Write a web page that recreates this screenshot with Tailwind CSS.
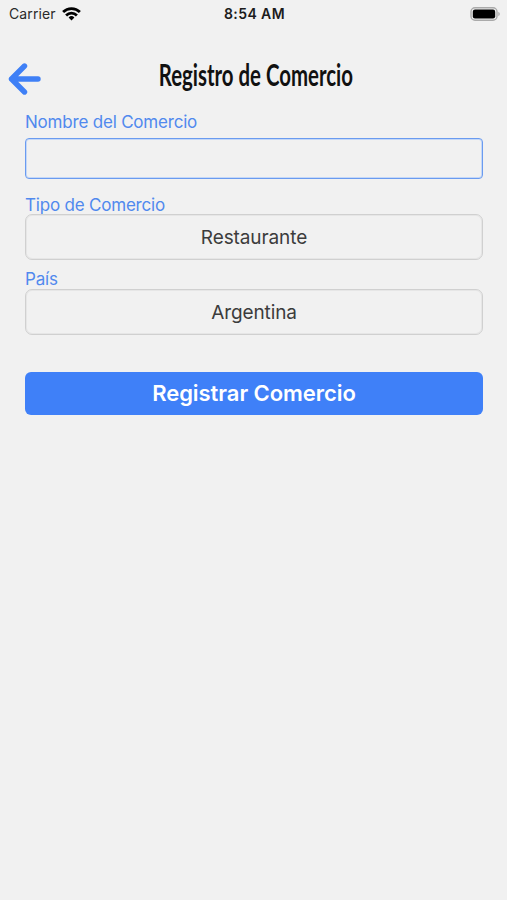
<!DOCTYPE html>
<html lang="es">

<head>
    <meta charset="UTF-8">
    <meta name="viewport" content="width=device-width, initial-scale=1.0">
    <script src="https://cdn.jsdelivr.net/npm/@tailwindcss/browser@4"></script>
    <title>Registro de Comercio</title>
</head>

<body class="min-h-screen bg-[#f1f1f1] font-['Inter',sans-serif] overflow-hidden">
    <!-- status bar -->
    <div class="grid grid-cols-3 items-center h-7 pl-[9px] pr-[7px]">
        <div class="flex items-center gap-[6px]">
            <span class="text-[14px] leading-5 tracking-[0.1px] text-[#2a2a2a]">Carrier</span>
            <svg class="w-[19px] h-[14px]" viewBox="0 0 19 14" fill="none" stroke="#000" stroke-width="2.8">
                <path d="M1.1 5.1a12 12 0 0 1 16.8 0" />
                <path d="M4.1 8.4a7.7 7.7 0 0 1 10.8 0" />
                <path d="M9.5 13.4l-2.9-2.9a4.1 4.1 0 0 1 5.8 0z" fill="#000" stroke="none" />
            </svg>
        </div>
        <span class="text-center text-[14px] leading-5 tracking-[0.4px] font-semibold text-[#1c1c1c] whitespace-nowrap">8:54 AM</span>
        <svg class="justify-self-end w-[30px] h-[14px]" viewBox="0 0 30 14">
            <rect x="1" y="0.8" width="26" height="12.4" rx="4" fill="#f1f1f1" stroke="#aaa" stroke-width="1.4" />
            <rect x="2.8" y="2.6" width="22.4" height="8.8" rx="2.2" fill="#000" />
            <path d="M28.3 4.8q1.5.8 1.5 2.2t-1.5 2.2z" fill="#aaa" />
        </svg>
    </div>

    <header class="grid grid-cols-[1fr_auto_1fr] items-start h-[80px] pt-[28px] px-2">
        <a href="#" aria-label="Volver" class="pt-[6px]">
            <svg class="w-[33px] h-[34px]" viewBox="0 0 33 34" fill="none" stroke="#3f80f6" stroke-width="5.4"
                stroke-linecap="round" stroke-linejoin="round">
                <path d="M3.5 17H30M16.5 4L3.5 17l13 13" />
            </svg>
        </a>
        <h1 class="w-[196px] flex justify-center whitespace-nowrap text-[30px] leading-[36px] font-bold text-[#111] font-['Lato',sans-serif]">
            <span class="scale-x-[0.68] translate-x-[2px]">Registro de Comercio</span>
        </h1>
    </header>

    <form class="flex flex-col pl-[25px] pr-[24px]">
        <label for="nombre" class="h-[30px] pt-[3px] text-[17px] leading-[22px] tracking-[-0.2px] text-[#5089ee]">Nombre del Comercio</label>
        <input id="nombre" type="text" class="h-[41px] rounded-[4px] border border-[#6a9bf0] px-3 outline-none shadow-[inset_0_0_0_1px_#c5d8f7]">

        <label class="h-[35px] pt-[15px] text-[17px] leading-[22px] tracking-[-0.2px] text-[#5089ee]">Tipo de Comercio</label>
        <button type="button" class="h-[46px] pt-[2px] rounded-[7px] border border-[#d0d0d0] shadow-[inset_0_0_0_1px_#e6e6e6] text-[19px] tracking-[-0.1px] text-[#3c3c3c]">Restaurante</button>

        <label class="h-[29px] pt-[8px] text-[17px] leading-[22px] tracking-[-0.2px] text-[#5089ee]">País</label>
        <button type="button" class="h-[46px] pt-[2px] rounded-[7px] border border-[#d0d0d0] shadow-[inset_0_0_0_1px_#e6e6e6] text-[19px] tracking-[-0.1px] text-[#3c3c3c]">Argentina</button>

        <button type="submit" class="mt-[37px] h-[43px] rounded-[6px] bg-[#3f80f8] text-[22px] tracking-[-0.05px] font-semibold text-white">Registrar Comercio</button>
    </form>
</body>

</html>
